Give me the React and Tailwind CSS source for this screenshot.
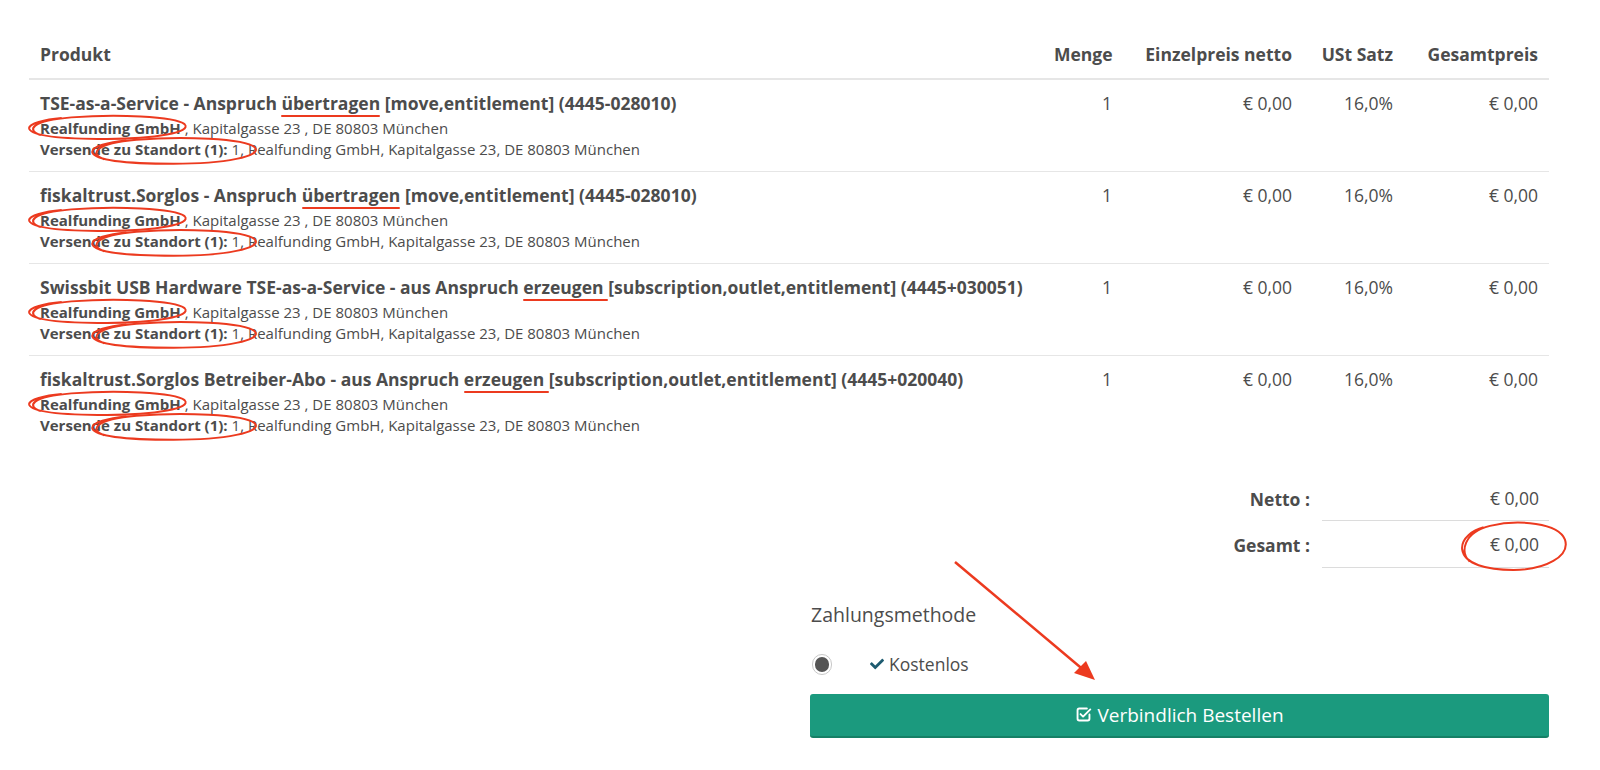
import React from 'react';
import { FaCheck } from 'react-icons/fa';

const rows = [
  { pre: 'TSE-as-a-Service - Anspruch ', mark: 'übertragen', post: ' [move,entitlement] (4445-028010)' },
  { pre: 'fiskaltrust.Sorglos - Anspruch ', mark: 'übertragen', post: ' [move,entitlement] (4445-028010)' },
  { pre: 'Swissbit USB Hardware TSE-as-a-Service - aus Anspruch ', mark: 'erzeugen ', post: '[subscription,outlet,entitlement] (4445+030051)' },
  { pre: 'fiskaltrust.Sorglos Betreiber-Abo - aus Anspruch ', mark: 'erzeugen ', post: '[subscription,outlet,entitlement] (4445+020040)' },
];

// hand drawn red ring used for the annotations
const Ring = ({ className }) => (
  <span className={`absolute pointer-events-none ${className}`}>
    <svg className="block w-full h-full overflow-visible" viewBox="0 0 100 40" preserveAspectRatio="none">
      <path
        d="M9 31 C 0 24, 3 10, 28 5 C 55 0, 92 3, 98 15 C 103 27, 80 37, 50 37 C 25 37, 4 33, 2 22 C 1 14, 12 8, 22 6"
        fill="none"
        stroke="#ec3a1f"
        strokeWidth="2"
        vectorEffect="non-scaling-stroke"
      />
    </svg>
  </span>
);

const Underline = () => (
  <span className="absolute left-0 right-0 -bottom-[2px] h-[2px] bg-[#ec3a1f] rounded-full" />
);

const CheckSquare = () => (
  <svg className="w-[17px] h-[17px] mr-[5px] -mt-[2px]" viewBox="0 0 20 20" fill="none" stroke="white" strokeWidth="2.2" strokeLinecap="round" strokeLinejoin="round">
    <path d="M14 3H5a2 2 0 0 0-2 2v10a2 2 0 0 0 2 2h10a2 2 0 0 0 2-2v-5" />
    <path d="M6.5 9.5l3 3L18 4" />
  </svg>
);

export default function App() {
  return (
    <div className="relative min-h-screen bg-white text-[#4c4c4c] font-['Open_Sans',sans-serif] pt-[30px] px-[29px] pr-[51px]">
      {/* header */}
      <div className="grid grid-cols-[1fr_80px_180px_101px_145px] border-b-2 border-[#e6e6e6] text-[17.5px] font-bold leading-[24px]">
        <div className="py-3 px-[11px]">Produkt</div>
        <div className="py-3 px-[11px] text-right whitespace-nowrap">Menge</div>
        <div className="py-3 px-[11px] text-right whitespace-nowrap">Einzelpreis netto</div>
        <div className="py-3 px-[11px] text-right whitespace-nowrap">USt Satz</div>
        <div className="py-3 px-[11px] text-right whitespace-nowrap">Gesamtpreis</div>
      </div>

      {/* lines */}
      {rows.map((r, i) => (
        <div
          key={i}
          className={`grid grid-cols-[1fr_80px_180px_101px_145px] text-[17.5px] leading-[24px] ${i < rows.length - 1 ? 'border-b border-[#e6e6e6]' : ''}`}
        >
          <div className="pt-[11px] pb-[11px] px-[11px]">
            <div className="font-bold mb-[3px] whitespace-nowrap">
              {r.pre}
              <span className="relative">
                {r.mark}
                <Underline />
              </span>
              {r.post}
            </div>
            <div className="text-[15px] leading-[21px] whitespace-nowrap">
              <span className="relative font-bold">
                Realfunding GmbH
                <Ring className="-left-[14px] -right-[7px] -top-[4px] -bottom-[3px]" />
              </span>{' '}
              , Kapitalgasse 23 , DE 80803 München
            </div>
            <div className="text-[15px] leading-[21px] whitespace-nowrap">
              <span className="font-bold">Versende </span>
              <span className="relative">
                <span className="font-bold">zu Standort (1):</span> 1,
                <Ring className="-left-[25px] -right-[14px] -top-[3px] -bottom-[7px]" />
              </span>{' '}
              Realfunding GmbH, Kapitalgasse 23, DE 80803 München
            </div>
          </div>
          <div className="pt-[11px] px-[11px] text-right">1</div>
          <div className="pt-[11px] px-[11px] text-right">€ 0,00</div>
          <div className="pt-[11px] px-[11px] text-right">16,0%</div>
          <div className="pt-[11px] px-[11px] text-right">€ 0,00</div>
        </div>
      ))}

      {/* totals */}
      <div className="flex justify-end mt-[29px]">
        <div className="grid grid-cols-[200px_227px] text-[17.5px] leading-[24px]">
          <div className="h-[45px] flex items-center justify-end pr-3 font-bold">Netto :</div>
          <div className="h-[45px] flex items-center justify-end pr-[10px] border-b border-[#dcdcdc]">€ 0,00</div>
          <div className="h-[47px] flex items-center justify-end pr-3 font-bold">Gesamt :</div>
          <div className="h-[47px] flex items-center justify-end pr-[10px] border-b border-[#dcdcdc]">
            <span className="relative">
              € 0,00
              <Ring className="-left-[30px] -right-[28px] -top-[13px] -bottom-[18px]" />
            </span>
          </div>
        </div>
      </div>

      {/* payment */}
      <div className="flex justify-end">
        <div className="w-[739px] pt-[33px]">
          <div className="text-[19.5px] leading-[27px] font-medium pl-[1px]">Zahlungsmethode</div>
          <div className="flex items-center h-[24px] mt-[24px] pl-[2px]">
            <span className="w-[20px] h-[21px] rounded-full border border-[#c8c8c8] bg-white flex items-center justify-center">
              <span className="w-[14px] h-[15px] rounded-full bg-[#555555]" />
            </span>
            <span className="ml-[38px] flex items-center text-[17.5px]">
              <FaCheck className="w-[14px] h-[14px] text-[#1d5b70] mr-[5px]" />
              Kostenlos
            </span>
          </div>
          <button className="mt-[18px] w-full h-[44px] rounded-[3px] bg-[#1b9a7e] border-b-2 border-[#168066] text-white text-[19px] flex items-center justify-center">
            <CheckSquare />
            Verbindlich Bestellen
          </button>
        </div>
      </div>

      {/* red arrow annotation */}
      <svg className="absolute left-[950px] top-[555px] w-[155px] h-[135px] pointer-events-none" viewBox="0 0 155 135">
        <line x1="5" y1="7" x2="136" y2="117" stroke="#ec3a1f" strokeWidth="2.5" />
        <polygon points="145,125 124,118 136,106" fill="#ec3a1f" />
      </svg>
    </div>
  );
}
